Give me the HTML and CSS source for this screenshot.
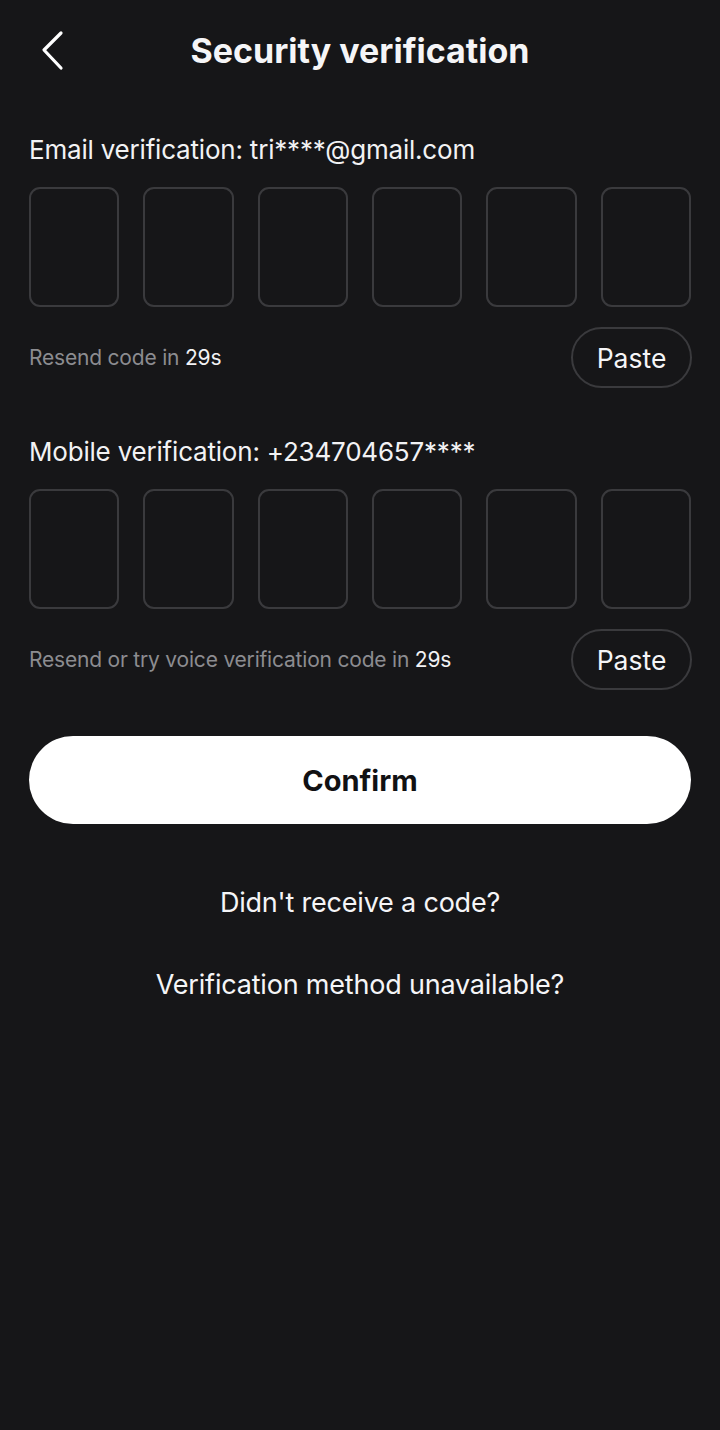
FILE: index.html
```html
<!DOCTYPE html>
<html lang="en">
<head>
<meta charset="utf-8">
<title>Security verification</title>
<link rel="stylesheet" href="styles.css">
</head>
<body>
<div class="page">
  <header class="header">
    <button class="back" aria-label="Back">
      <svg width="28" height="44" viewBox="0 0 28 44"><polyline points="21,4 4,21 21,39" fill="none" stroke="#fff" stroke-width="3.2" stroke-linecap="round" stroke-linejoin="round"/></svg>
    </button>
    <h1 class="title">Security verification</h1>
  </header>

  <section class="block block-email">
    <div class="label">Email verification: tri****@gmail.com</div>
    <div class="boxes">
      <div class="box"></div><div class="box"></div><div class="box"></div>
      <div class="box"></div><div class="box"></div><div class="box"></div>
    </div>
    <div class="row">
      <div class="resend">Resend code in <span class="count">29s</span></div>
      <button class="paste">Paste</button>
    </div>
  </section>

  <section class="block block-mobile">
    <div class="label">Mobile verification: +234704657****</div>
    <div class="boxes">
      <div class="box"></div><div class="box"></div><div class="box"></div>
      <div class="box"></div><div class="box"></div><div class="box"></div>
    </div>
    <div class="row">
      <div class="resend">Resend or try voice verification code in <span class="count">29s</span></div>
      <button class="paste">Paste</button>
    </div>
  </section>

  <button class="confirm">Confirm</button>

  <div class="links">
    <a class="link">Didn't receive a code?</a>
    <a class="link">Verification method unavailable?</a>
  </div>
</div>
</body>
</html>
```

FILE: styles.css
```css
html, body {
  margin: 0;
  padding: 0;
  background: #161618;
}
body {
  font-family: Inter, "Noto Sans", sans-serif;
  color: #f5f5f7;
  min-height: 1430px;
}
.page {
  padding: 0 29px;
}
.header {
  position: relative;
  height: 102px;
  display: flex;
  align-items: center;
  justify-content: center;
}
.back {
  position: absolute;
  left: 11px;
  top: 29px;
  background: none;
  border: 0;
  padding: 0;
  width: 28px;
  height: 44px;
  cursor: pointer;
}
.back svg { display: block; }
.title {
  margin: 0;
  font-size: 34px;
  font-weight: 700;
  letter-spacing: 0;
  color: #f5f5f7;
  line-height: 40px;
  margin-top: 0;
}
.block-email { margin-top: 32px; }
.block-mobile { margin-top: 48px; }
.label {
  font-size: 26px;
  line-height: 32px;
  letter-spacing: -0.2px;
  color: #f2f2f4;
}
.boxes {
  margin-top: 21px;
  display: grid;
  grid-template-columns: repeat(6, 1fr);
  gap: 24px;
}
.box {
  height: 116px;
  border: 2px solid #3a3a3d;
  border-radius: 11px;
}
.row {
  margin-top: 20px;
  display: flex;
  align-items: center;
  justify-content: space-between;
}
.resend {
  font-size: 21px;
  color: #8c8c90;
  letter-spacing: -0.2px;
}
.count { color: #f2f2f4; }
.paste {
  width: 121px;
  height: 61px;
  border: 2px solid #3a3a3d;
  border-radius: 31px;
  background: transparent;
  color: #f5f5f7;
  font-family: Inter, "Noto Sans", sans-serif;
  font-size: 26.5px;
  padding: 0;
  margin-right: -1px;
}
.confirm {
  display: block;
  width: 100%;
  margin-top: 46px;
  height: 88px;
  border: 0;
  border-radius: 44px;
  background: #ffffff;
  color: #111113;
  font-family: Inter, "Noto Sans", sans-serif;
  font-size: 29px;
  font-weight: 700;
}
.links {
  margin-top: 63px;
  display: flex;
  flex-direction: column;
  align-items: center;
  gap: 50px;
}
.link {
  font-size: 27px;
  line-height: 32px;
  color: #f5f5f7;
  letter-spacing: -0.2px;
}
```
